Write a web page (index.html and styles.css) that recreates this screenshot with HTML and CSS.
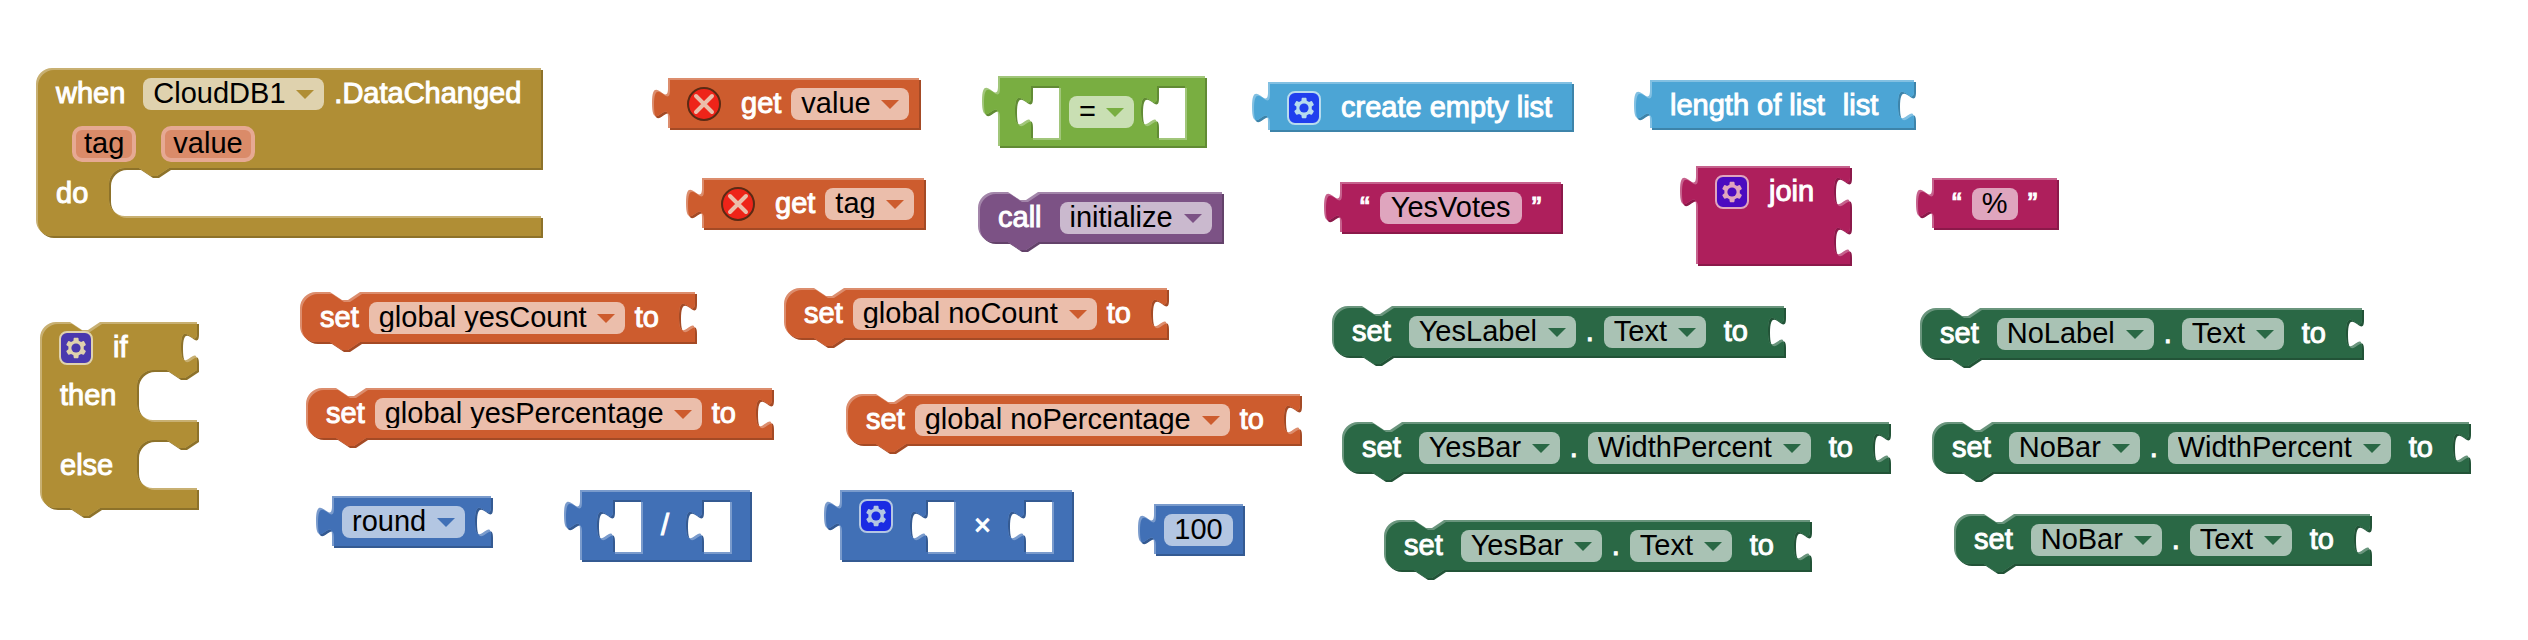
FILE: index.html
```html
<!DOCTYPE html>
<html lang="en">
<head>
<meta charset="utf-8">
<meta name="viewport" content="width=device-width, initial-scale=1">
<title>Voting app blocks</title>
<link rel="stylesheet" href="styles.css">
</head>
<body>
<svg class="defs" aria-hidden="true">
  <symbol id="arrow" viewBox="0 0 18 9"><path d="M0 0H18L9 9Z" fill="currentColor"/></symbol>
  <symbol id="gear" viewBox="-0.5 -0.5 17 17">
    <rect class="gear-box" width="16" height="16" rx="3.5"/>
    <path class="gear-wheel" d="m4.203,7.296 0,1.368 -0.92,0.677 -0.11,0.41 0.9,1.559 0.41,0.11 1.043,-0.457 1.187,0.683 0.127,1.134 0.3,0.3 1.8,0 0.3,-0.299 0.127,-1.138 1.185,-0.682 1.046,0.458 0.409,-0.11 0.9,-1.559 -0.11,-0.41 -0.92,-0.677 0,-1.366 0.92,-0.677 0.11,-0.41 -0.9,-1.559 -0.409,-0.109 -1.046,0.458 -1.185,-0.682 -0.127,-1.138 -0.3,-0.299 -1.8,0 -0.3,0.3 -0.126,1.135 -1.187,0.682 -1.043,-0.457 -0.41,0.11 -0.899,1.559 0.108,0.409z"/>
    <circle class="gear-hub" cx="8" cy="8" r="2.3"/>
  </symbol>
  <symbol id="error" viewBox="0 0 34 34">
    <circle cx="17" cy="17" r="16" fill="#ee2419" stroke="#5a2a14" stroke-width="2"/>
    <path class="cross" d="M9 9L25 25M25 9L9 25"/>
  </symbol>
</svg>

<main class="workspace">
  <section class="block control event at-event" data-shape="event">
    <div class="row">
      <span class="label space-after">when</span>
      <span class="menu"><select aria-label="Component"><option>CloudDB1</option></select><svg><use href="#arrow"/></svg></span>
      <span class="label">.DataChanged</span>
    </div>
    <div class="params"><button type="button">tag</button><button type="button">value</button></div>
    <div class="clauses"><span class="label">do</span><span class="mouth"></span></div>
  </section>

  <section class="block variable at-get-value" data-shape="value">
    <div class="row ends-field">
      <button class="icon" type="button" aria-label="Error"><svg><use href="#error"/></svg></button>
      <span class="label">get</span>
      <span class="menu"><select aria-label="Variable"><option>value</option></select><svg><use href="#arrow"/></svg></span>
    </div>
  </section>

  <section class="block variable at-get-tag" data-shape="value">
    <div class="row ends-field">
      <button class="icon" type="button" aria-label="Error"><svg><use href="#error"/></svg></button>
      <span class="label">get</span>
      <span class="menu"><select aria-label="Variable"><option>tag</option></select><svg><use href="#arrow"/></svg></span>
    </div>
  </section>

  <section class="block logic at-equals" data-shape="value">
    <div class="row inline">
      <span class="hole"></span>
      <span class="menu"><select aria-label="Comparison"><option>=</option></select><svg><use href="#arrow"/></svg></span>
      <span class="hole"></span>
    </div>
  </section>

  <section class="block procedure at-call" data-shape="stack">
    <div class="row ends-field">
      <span class="label space-after">call</span>
      <span class="menu"><select aria-label="Procedure"><option>initialize</option></select><svg><use href="#arrow"/></svg></span>
    </div>
  </section>

  <section class="block list at-empty-list" data-shape="value">
    <div class="row">
      <button class="icon" type="button" aria-label="Settings"><svg><use href="#gear"/></svg></button>
      <span class="label">create empty list</span>
    </div>
  </section>

  <section class="block text at-yes-votes" data-shape="value">
    <div class="row">
      <span class="label">“</span><input class="words" type="text" aria-label="Text" value="YesVotes"><span class="label">”</span>
    </div>
  </section>

  <section class="block list at-length" data-shape="value">
    <div class="row plug">
      <span class="label space-after">length of list</span><span class="label">list</span>
    </div>
  </section>

  <section class="block text at-join" data-shape="value">
    <div class="row plug tall">
      <button class="icon" type="button" aria-label="Settings"><svg><use href="#gear"/></svg></button>
      <span class="label">join</span>
    </div>
    <div class="row plug"></div>
  </section>

  <section class="block text at-percent" data-shape="value">
    <div class="row">
      <span class="label">“</span><input class="symbol" type="text" aria-label="Text" value="%"><span class="label">”</span>
    </div>
  </section>

  <section class="block control at-if" data-shape="stack">
    <div class="row plug">
      <button class="icon" type="button" aria-label="Settings"><svg><use href="#gear"/></svg></button>
      <span class="label">if</span>
    </div>
    <div class="clauses">
      <span class="label">then</span><span class="mouth deep"></span>
      <span class="label">else</span><span class="mouth"></span>
    </div>
  </section>

  <section class="block variable at-yes-count" data-shape="stack">
    <div class="row plug">
      <span class="label">set</span>
      <span class="menu"><select aria-label="Variable"><option>global yesCount</option></select><svg><use href="#arrow"/></svg></span>
      <span class="label">to</span>
    </div>
  </section>

  <section class="block variable at-no-count" data-shape="stack">
    <div class="row plug">
      <span class="label">set</span>
      <span class="menu"><select aria-label="Variable"><option>global noCount</option></select><svg><use href="#arrow"/></svg></span>
      <span class="label">to</span>
    </div>
  </section>

  <section class="block variable at-yes-percentage" data-shape="stack">
    <div class="row plug">
      <span class="label">set</span>
      <span class="menu"><select aria-label="Variable"><option>global yesPercentage</option></select><svg><use href="#arrow"/></svg></span>
      <span class="label">to</span>
    </div>
  </section>

  <section class="block variable at-no-percentage" data-shape="stack">
    <div class="row plug">
      <span class="label">set</span>
      <span class="menu"><select aria-label="Variable"><option>global noPercentage</option></select><svg><use href="#arrow"/></svg></span>
      <span class="label">to</span>
    </div>
  </section>

  <section class="block math at-round" data-shape="value">
    <div class="row plug starts-field ends-field">
      <span class="menu"><select aria-label="Rounding"><option>round</option></select><svg><use href="#arrow"/></svg></span>
    </div>
  </section>

  <section class="block math at-divide" data-shape="value">
    <div class="row inline">
      <span class="hole"></span><span class="label">/</span><span class="hole"></span>
    </div>
  </section>

  <section class="block math at-multiply" data-shape="value">
    <div class="row inline">
      <button class="icon" type="button" aria-label="Settings"><svg><use href="#gear"/></svg></button>
      <span class="hole"></span><span class="label">×</span><span class="hole"></span>
    </div>
  </section>

  <section class="block math at-hundred" data-shape="value">
    <div class="row starts-field ends-field">
      <input class="number" type="text" inputmode="numeric" aria-label="Number" value="100">
    </div>
  </section>

  <section class="block component at-yes-label" data-shape="stack">
    <div class="row plug">
      <span class="label space-after">set</span>
      <span class="menu"><select aria-label="Component"><option>YesLabel</option></select><svg><use href="#arrow"/></svg></span>
      <span class="label">.</span>
      <span class="menu"><select aria-label="Property"><option>Text</option></select><svg><use href="#arrow"/></svg></span>
      <span class="label space-before">to</span>
    </div>
  </section>

  <section class="block component at-yes-width" data-shape="stack">
    <div class="row plug">
      <span class="label space-after">set</span>
      <span class="menu"><select aria-label="Component"><option>YesBar</option></select><svg><use href="#arrow"/></svg></span>
      <span class="label">.</span>
      <span class="menu"><select aria-label="Property"><option>WidthPercent</option></select><svg><use href="#arrow"/></svg></span>
      <span class="label space-before">to</span>
    </div>
  </section>

  <section class="block component at-yes-text" data-shape="stack">
    <div class="row plug">
      <span class="label space-after">set</span>
      <span class="menu"><select aria-label="Component"><option>YesBar</option></select><svg><use href="#arrow"/></svg></span>
      <span class="label">.</span>
      <span class="menu"><select aria-label="Property"><option>Text</option></select><svg><use href="#arrow"/></svg></span>
      <span class="label space-before">to</span>
    </div>
  </section>

  <section class="block component at-no-label" data-shape="stack">
    <div class="row plug">
      <span class="label space-after">set</span>
      <span class="menu"><select aria-label="Component"><option>NoLabel</option></select><svg><use href="#arrow"/></svg></span>
      <span class="label">.</span>
      <span class="menu"><select aria-label="Property"><option>Text</option></select><svg><use href="#arrow"/></svg></span>
      <span class="label space-before">to</span>
    </div>
  </section>

  <section class="block component at-no-width" data-shape="stack">
    <div class="row plug">
      <span class="label space-after">set</span>
      <span class="menu"><select aria-label="Component"><option>NoBar</option></select><svg><use href="#arrow"/></svg></span>
      <span class="label">.</span>
      <span class="menu"><select aria-label="Property"><option>WidthPercent</option></select><svg><use href="#arrow"/></svg></span>
      <span class="label space-before">to</span>
    </div>
  </section>

  <section class="block component at-no-text" data-shape="stack">
    <div class="row plug">
      <span class="label space-after">set</span>
      <span class="menu"><select aria-label="Component"><option>NoBar</option></select><svg><use href="#arrow"/></svg></span>
      <span class="label">.</span>
      <span class="menu"><select aria-label="Property"><option>Text</option></select><svg><use href="#arrow"/></svg></span>
      <span class="label space-before">to</span>
    </div>
  </section>
</main>
<script src="blocks.js"></script>
</body>
</html>
```

FILE: styles.css
```css
* {
  box-sizing: border-box;
}

body {
  margin: 0;
  background: #fff;
  font: 29px/30px "Liberation Sans", Arial, sans-serif;
}

.defs {
  position: absolute;
  width: 0;
  height: 0;
}

/* The workspace is a free canvas; each block has its own place on it. */
.workspace {
  position: relative;
  min-height: 100vh;
}

.block {
  position: absolute;
  isolation: isolate;
  white-space: nowrap;
  color: #fff;
}

.at-event { left: 36px; top: 68px; }
.at-get-value { left: 668px; top: 78px; }
.at-get-tag { left: 702px; top: 178px; }
.at-equals { left: 998px; top: 76px; }
.at-call { left: 978px; top: 192px; }
.at-empty-list { left: 1268px; top: 82px; }
.at-yes-votes { left: 1340px; top: 182px; }
.at-length { left: 1650px; top: 80px; }
.at-join { left: 1696px; top: 166px; }
.at-percent { left: 1932px; top: 178px; }
.at-if { left: 40px; top: 322px; }
.at-yes-count { left: 300px; top: 292px; }
.at-no-count { left: 784px; top: 288px; }
.at-yes-percentage { left: 306px; top: 388px; }
.at-no-percentage { left: 846px; top: 394px; }
.at-round { left: 332px; top: 496px; }
.at-divide { left: 580px; top: 490px; }
.at-multiply { left: 840px; top: 490px; }
.at-hundred { left: 1154px; top: 504px; }
.at-yes-label { left: 1332px; top: 306px; }
.at-yes-width { left: 1342px; top: 422px; }
.at-yes-text { left: 1384px; top: 520px; }
.at-no-label { left: 1920px; top: 308px; }
.at-no-width { left: 1932px; top: 422px; }
.at-no-text { left: 1954px; top: 514px; }

/* Block colours: --fill is the body, --gear the settings icon. */
.control { --fill: #b08e35; --gear: #4a39ae; }
.variable { --fill: #cd5c2e; }
.logic { --fill: #79ae41; }
.procedure { --fill: #7c5285; }
.list { --fill: #4ca5d5; --gear: #203fee; }
.text { --fill: #ae1f5c; --gear: #4b0bc0; }
.math { --fill: #4170b6; --gear: #1a2be3; }
.component { --fill: #2a6845; }

/* Block outline */
.shape {
  position: absolute;
  z-index: -1;
  left: 0;
  top: 0;
  overflow: visible;
}

.shape-dark { fill: color-mix(in srgb, var(--fill) 80%, #000); }
.shape-light { fill: color-mix(in srgb, var(--fill) 70%, #fff); }
.shape-fill { fill: var(--fill); }

/* Rows of fields */
.row {
  display: flex;
  align-items: flex-start;
  gap: 10px;
  padding: 10px 20px 8px;
}

.row.starts-field { padding-left: 10px; }
.row.ends-field { padding-right: 10px; }
.row.plug { padding-right: 36px; min-height: 48px; }
.row.plug.ends-field { padding-right: 26px; }
.row.tall { min-height: 50px; }
.row.inline { align-items: center; }

.label { -webkit-text-stroke: 1px currentColor; }

.space-after { margin-right: 8px; }
.space-before { margin-left: 8px; }

.inline .label {
  margin: 0 10px;
  padding-bottom: 2px;
}

.hole {
  width: 44px;
  height: 52px;
  margin-left: -3px;
}

/* Statement mouths */
.clauses {
  display: grid;
  grid-template-columns: auto 1fr;
  gap: 20px 21px;
  padding: 0 0 20px 20px;
}

.clauses .label { padding-top: 10px; }

.mouth {
  min-width: 60px;
  height: 48px;
}

.mouth.deep { height: 50px; }

/* Event parameters */
.params {
  display: flex;
  gap: 25px;
  padding: 8px 36px 6px;
}

.params button {
  height: 36px;
  padding: 0 8px 2px;
  border: 4px solid #e6a993;
  border-radius: 10px;
  background: #da8b69;
  color: #000;
  font: inherit;
  line-height: 26px;
}

/* Fields */
.menu {
  position: relative;
  display: flex;
}

select,
input {
  height: 32px;
  margin: 0;
  border: 0;
  border-radius: 8px;
  background: rgb(255 255 255 / 60%);
  color: #000;
  font: inherit;
}

select {
  appearance: none;
  padding: 0 38px 2px 10px;
}

input {
  padding: 0 0 2px;
  text-align: center;
}

.words { width: 142px; }
.symbol { width: 46px; }
.number { width: 69px; }

.menu svg {
  position: absolute;
  right: 10px;
  top: 12px;
  width: 18px;
  height: 9px;
  color: var(--fill);
  pointer-events: none;
}

/* Icons */
.icon {
  align-self: flex-start;
  width: 34px;
  height: 34px;
  margin: -1px 10px -3px -1px;
  padding: 0;
  border: 0;
  background: none;
}

.icon svg {
  display: block;
  width: 34px;
  height: 34px;
}

.gear-box {
  fill: var(--gear);
  stroke: color-mix(in srgb, var(--fill) 40%, #fff);
  stroke-width: 1;
}

.gear-wheel { fill: color-mix(in srgb, var(--fill) 40%, #fff); }
.gear-hub { fill: var(--gear); }

.cross {
  fill: none;
  stroke: color-mix(in srgb, var(--fill) 40%, #fff);
  stroke-width: 4;
  stroke-linecap: round;
}
```

FILE: blocks.js
```js
// Draws the puzzle-piece outline behind each block, sized to its fields.
const SVG = "http://www.w3.org/2000/svg";
const SOCKET = "v10 c0,20 -16,-16 -16,15 s16,-5 16,15";
const OUTPUT = "V40 c0,-20 -16,16 -16,-15 s16,5 16,-15 z";
const NOTCH = "l12,8 6,0 12,-8";
const NOTCH_BACK = "l-12,8 -6,0 -12,-8";

function box(block, el) {
  const a = block.getBoundingClientRect();
  const b = el.getBoundingClientRect();
  return {
    x: Math.round(b.left - a.left),
    y: Math.round(b.top - a.top),
    w: Math.round(b.width),
    h: Math.round(b.height)
  };
}

function outline(block, w, h) {
  const shape = block.dataset.shape;
  let d = "M0,0";
  if (shape !== "value") d = "M0,16 a16,16 0 0 1 16,-16";
  if (shape === "stack") d += "H30" + NOTCH;
  d += `H${w}`;

  for (const el of block.querySelectorAll(".plug, .mouth")) {
    const r = box(block, el);
    d += `V${r.y}`;
    if (el.classList.contains("plug")) {
      d += `${SOCKET}V${r.y + r.h}`;
    } else {
      d += `H${r.x + 60}${NOTCH_BACK}h-14a16,16 0 0 0 -16,16v${r.h - 32}a16,16 0 0 0 16,16H${w}`;
    }
  }

  d += `V${h}`;
  if (shape === "stack") d += "H60" + NOTCH_BACK;
  d += shape === "value" ? "H0" + OUTPUT : "H16a16,16 0 0 1 -16,-16z";

  for (const el of block.querySelectorAll(".hole")) {
    const r = box(block, el);
    d += `M${r.x + 16},${r.y}${SOCKET}V${r.y + r.h}H${r.x + r.w}V${r.y}z`;
  }
  return d;
}

function node(name, attrs, parent) {
  const el = document.createElementNS(SVG, name);
  for (const key in attrs) el.setAttribute(key, attrs[key]);
  parent.append(el);
  return el;
}

document.querySelectorAll(".block").forEach((block, i) => {
  const rect = block.getBoundingClientRect();
  const w = Math.round(rect.width);
  const h = Math.round(rect.height);
  const d = outline(block, w, h);
  const svg = document.createElementNS(SVG, "svg");
  svg.setAttribute("class", "shape");
  svg.setAttribute("width", w);
  svg.setAttribute("height", h);
  svg.setAttribute("aria-hidden", "true");

  const clip = node("clipPath", { id: `outline-${i}` }, svg);
  node("path", { d, "clip-rule": "evenodd" }, clip);
  node("path", { d, "fill-rule": "evenodd", class: "shape-dark", transform: "translate(2 2)" }, svg);
  node("path", { d, "fill-rule": "evenodd", class: "shape-light" }, svg);
  const body = node("g", { "clip-path": `url(#outline-${i})` }, svg);
  node("path", { d, "fill-rule": "evenodd", class: "shape-fill", transform: "translate(2 2)" }, body);
  block.prepend(svg);
});
```
